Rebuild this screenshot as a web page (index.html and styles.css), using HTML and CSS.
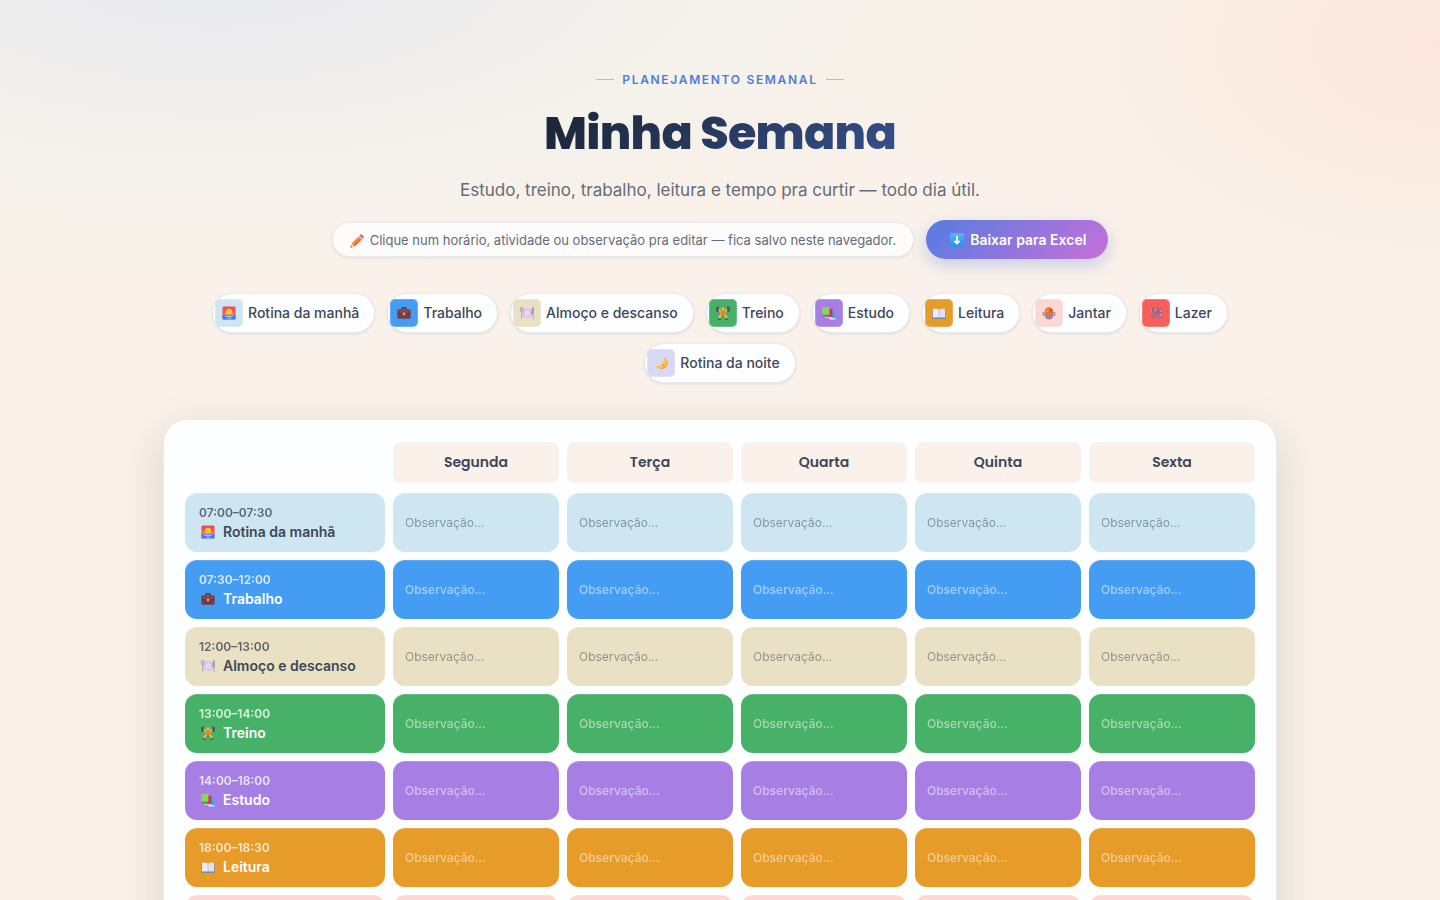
FILE: index.html
```
<!DOCTYPE html>
<html lang="pt-BR">
<head>
    <meta charset="UTF-8">
    <meta name="viewport" content="width=device-width, initial-scale=1.0">
    <title>Minha Semana</title>
    <link rel="stylesheet" href="styles.css">
</head>
<body>
    <svg class="sprite" aria-hidden="true">
        <defs>
            <linearGradient id="sky" x1="0" y1="0" x2="0" y2="1">
                <stop offset="0" stop-color="#f4445b"/>
                <stop offset="1" stop-color="#ff7a4a"/>
            </linearGradient>
            <linearGradient id="blue" x1="0" y1="0" x2="0" y2="1">
                <stop offset="0" stop-color="#55b4ff"/>
                <stop offset="1" stop-color="#2f8fe8"/>
            </linearGradient>
        </defs>
        <symbol id="i-sunrise" viewBox="0 0 32 32">
            <rect x="1" y="1" width="30" height="30" rx="3" fill="url(#sky)"/>
            <path d="M1 20h30v8a3 3 0 0 1-3 3H4a3 3 0 0 1-3-3z" fill="#3e7df0"/>
            <path d="M6 20a10 10 0 1 1 20 0z" fill="#ff9d1c"/>
            <circle cx="16" cy="13" r="7" fill="#ffc928"/>
            <path d="M1 20h30v3H1z" fill="#8a7cf5"/>
            <path d="M8 24h16M12 28h9" stroke="#b9d3ff" stroke-width="2"/>
        </symbol>
        <symbol id="i-work" viewBox="0 0 32 32">
            <path d="M11 9V6q0-2 2-2h6q2 0 2 2v3" fill="none" stroke="#5a3340" stroke-width="3"/>
            <rect x="1" y="8" width="30" height="21" rx="2" fill="#6d3f49"/>
            <path d="M1 10q0-2 2-2h26q2 0 2 2v8H1z" fill="#82474b"/>
            <path d="M1 18h30" stroke="#55313d" stroke-width="2"/>
            <rect x="13" y="15" width="6" height="6" rx="1" fill="#ef8b62"/>
        </symbol>
        <symbol id="i-lunch" viewBox="0 0 32 32">
            <circle cx="17" cy="16" r="11" fill="#d3c2f4"/>
            <circle cx="17" cy="16" r="7" fill="#e4d8fc"/>
            <path d="M1 3v7q0 3 3 3t3-3V3M4 3v26" fill="none" stroke="#a99ab9" stroke-width="2"/>
            <path d="M30 2v28M30 3q-5 6-4 15h4z" fill="#b4a6c5" stroke="#a99ab9" stroke-width="2"/>
        </symbol>
        <symbol id="i-gym" viewBox="0 0 32 32">
            <path d="M5 7h22" stroke="#9897a6" stroke-width="2"/>
            <path d="M2 2v11M5 1v12M27 1v12M30 2v11" stroke="#5a4f63" stroke-width="3"/>
            <path d="M7 8l5 7h8l5-7" fill="none" stroke="#ffb52d" stroke-width="4"/>
            <circle cx="16" cy="7" r="4" fill="#ffb52d"/>
            <path d="M11 12h10l-1 9h-8z" fill="#ff7139"/>
            <path d="M12 20l-4 4 1 5M20 20l4 4-1 5" fill="none" stroke="#ffc13a" stroke-width="4"/>
            <path d="M5 30h6M21 30h6" stroke="#4e4259" stroke-width="3"/>
        </symbol>
        <symbol id="i-books" viewBox="0 0 32 32">
            <path d="M18 9l13 3v17l-13 1z" fill="#32aee9"/>
            <path d="M17 27l14 1v3H17z" fill="#d0e8f5"/>
            <path d="M12 5l12 2v20H12z" fill="#d82e65"/>
            <path d="M8 25h16v2H8z" fill="#eadce9"/>
            <path d="M1 2h16v18H1z" fill="#8ad653"/>
            <path d="M1 20h16v4H4q-3 0-3-4z" fill="#5b8b6b"/>
        </symbol>
        <symbol id="i-book" viewBox="0 0 32 32">
            <path d="M1 8h30v21H1z" fill="#4388cb"/>
            <path d="M2 6q9-1 14 2v18H2z" fill="#eee9fb"/>
            <path d="M30 6q-9-1-14 2v18h14z" fill="#e5dff5"/>
            <path d="M16 8v18" stroke="#c1b6d6" stroke-width="2"/>
        </symbol>
        <symbol id="i-dinner" viewBox="0 0 32 32">
            <path d="M6 15H3v6h4M26 15h3v6h-4" fill="none" stroke="#9a8cae" stroke-width="3"/>
            <path d="M6 18h20q0 13-10 13T6 18z" fill="#9486b3"/>
            <circle cx="16" cy="13" r="10" fill="#ee7137"/>
            <circle cx="12" cy="10" r="3" fill="#ff8c3d"/>
            <circle cx="20" cy="10" r="3" fill="#d0552c"/>
            <path d="M8 16l4 3M21 17l4-3" stroke="#71803b" stroke-width="2"/>
        </symbol>
        <symbol id="i-party" viewBox="0 0 32 32">
            <path d="M3 30l6-17 11 10z" fill="#c9843f"/>
            <path d="M5 24l5 3M8 17l8 8" stroke="#8a5bb8" stroke-width="3"/>
            <path d="M10 14q-4-6 1-11M14 16Q21 12 19 3M18 20q3-7 12-6" fill="none" stroke="#3f7fd0" stroke-width="3"/>
            <path d="M15 18L28 5M20 24l9 1" stroke="#9a5bd0" stroke-width="3"/>
            <path d="M4 8h3v3H4zM25 10h3v3h-3zM25 19h3v3h-3zM14 7h3v3h-3z" fill="#e8b838"/>
        </symbol>
        <symbol id="i-moon" viewBox="0 0 32 32">
            <path d="M23 2q14 12 5 22-11 11-25-1 12 1 17-6 4-7 3-15z" fill="#ffc442"/>
            <path d="M3 23q12 9 22 0 8-8 1-18 10 12 1 21-11 9-24-3z" fill="#f1a449"/>
            <circle cx="21" cy="20" r="2" fill="#e88b3c"/>
        </symbol>
        <symbol id="i-pencil" viewBox="0 0 32 32">
            <path d="M1 31l3-10 7 7z" fill="#ffc18a"/>
            <path d="M4 21L20 5l7 7-16 16z" fill="#ff8743"/>
            <path d="M8 25L24 9l3 3-16 16z" fill="#e96832"/>
            <path d="M19 6l3-3 7 7-3 3z" fill="#d5cbe4"/>
            <path d="M22 3l2-2q2-1 4 1l3 3q1 2-1 4l-2 2z" fill="#f45467"/>
            <path d="M1 31l1-4 3 3z" fill="#694454"/>
        </symbol>
        <symbol id="i-down" viewBox="0 0 32 32">
            <rect x="0" y="0" width="32" height="32" rx="3" fill="url(#blue)"/>
            <path d="M16 6v18M10 18l6 6 6-6" fill="none" stroke="#fff" stroke-width="4"/>
        </symbol>
    </svg>

    <main class="page">
        <header class="hero">
            <p class="eyebrow">Planejamento semanal</p>
            <h1>Minha Semana</h1>
            <p class="subtitle">Estudo, treino, trabalho, leitura e tempo pra curtir — todo dia útil.</p>
            <div class="actions">
                <p class="hint"><svg class="icon"><use href="#i-pencil"/></svg>Clique num horário, atividade ou observação pra editar — fica salvo neste navegador.</p>
                <button type="button" class="download"><svg class="icon"><use href="#i-down"/></svg>Baixar para Excel</button>
            </div>
        </header>

        <ul class="legend">
            <li><span class="swatch morning"><svg class="icon"><use href="#i-sunrise"/></svg></span>Rotina da manhã</li>
            <li><span class="swatch work"><svg class="icon"><use href="#i-work"/></svg></span>Trabalho</li>
            <li><span class="swatch lunch"><svg class="icon"><use href="#i-lunch"/></svg></span>Almoço e descanso</li>
            <li><span class="swatch gym"><svg class="icon"><use href="#i-gym"/></svg></span>Treino</li>
            <li><span class="swatch study"><svg class="icon"><use href="#i-books"/></svg></span>Estudo</li>
            <li><span class="swatch reading"><svg class="icon"><use href="#i-book"/></svg></span>Leitura</li>
            <li><span class="swatch dinner"><svg class="icon"><use href="#i-dinner"/></svg></span>Jantar</li>
            <li><span class="swatch leisure"><svg class="icon"><use href="#i-party"/></svg></span>Lazer</li>
            <li><span class="swatch night"><svg class="icon"><use href="#i-moon"/></svg></span>Rotina da noite</li>
        </ul>

        <div class="card">
            <table>
                <thead>
                    <tr>
                        <td class="corner"></td>
                        <th scope="col">Segunda</th>
                        <th scope="col">Terça</th>
                        <th scope="col">Quarta</th>
                        <th scope="col">Quinta</th>
                        <th scope="col">Sexta</th>
                    </tr>
                </thead>
                <tbody id="schedule"></tbody>
            </table>
        </div>
    </main>

    <script src="script.js"></script>
</body>
</html>
```
FILE: styles.css
```
* {
    box-sizing: border-box;
}
body {
    margin: 0;
    min-height: 100vh;
    font-family: Inter, "Liberation Sans", sans-serif;
    color: #3d4759;
    background:
        radial-gradient(800px 320px at 15% -40px, #e6e8ef, rgba(243, 241, 236, 0.8) 60%, transparent),
        radial-gradient(480px 300px at 100% 45px, #fbe6dd, rgba(249, 238, 228, 0.6) 65%, transparent),
        #f9f1ea;
}
p, ul {
    margin: 0;
    padding: 0;
}
.sprite {
    position: absolute;
    width: 0;
    height: 0;
}
.icon {
    width: 14px;
    height: 14px;
    flex: none;
}
.page {
    max-width: 1162px;
    margin: 0 auto;
    padding: 72px 24px 64px;
}
.hero {
    text-align: center;
}
.eyebrow {
    display: flex;
    align-items: center;
    justify-content: center;
    gap: 8px;
    font-size: 12px;
    line-height: 15px;
    font-weight: 600;
    letter-spacing: 0.14em;
    text-transform: uppercase;
    color: #4f7be0;
}
.eyebrow::before,
.eyebrow::after {
    content: "";
    width: 18px;
    height: 1px;
    background: #a9bbe6;
}
h1 {
    width: fit-content;
    margin: 19px auto;
    font-family: Poppins, Inter, sans-serif;
    font-size: 46px;
    line-height: 54px;
    font-weight: 800;
    letter-spacing: -0.015em;
    color: transparent;
    background: linear-gradient(135deg, #1a2433, #34508c);
    background-clip: text;
    -webkit-background-clip: text;
}
.subtitle {
    font-size: 17px;
    line-height: 22px;
    color: #646c79;
}
.actions {
    display: flex;
    flex-wrap: wrap;
    align-items: center;
    justify-content: center;
    gap: 12px;
    margin-top: 19px;
}
.hint {
    display: flex;
    align-items: center;
    gap: 6px;
    padding: 9px 17px 7px;
    border: 1px solid #e6eaf1;
    border-radius: 999px;
    background: #fefcfb;
    box-shadow: 0 1px 3px rgba(30, 40, 60, 0.1);
    font-size: 13px;
    line-height: 17px;
    color: #646c79;
}
.download {
    display: flex;
    align-items: center;
    gap: 6px;
    padding: 10px 22px 10px 24px;
    border: none;
    border-radius: 999px;
    background: linear-gradient(135deg, #537de2, #c86fd9);
    box-shadow: 0 6px 16px rgba(79, 123, 224, 0.3);
    font: 600 14px/19px Inter, sans-serif;
    color: #fff;
    cursor: pointer;
}
.legend {
    display: flex;
    flex-wrap: wrap;
    justify-content: center;
    gap: 10px 12px;
    max-width: 1040px;
    margin: 34px auto 0;
    list-style: none;
}
.legend li {
    display: flex;
    align-items: center;
    gap: 5px;
    padding: 5px 15px 5px 2px;
    border: 1px solid #e6eaf1;
    border-radius: 999px;
    background: #fdfeff;
    box-shadow: 0 1px 3px rgba(30, 40, 60, 0.1);
    font-size: 14px;
    line-height: 18px;
    font-weight: 500;
}
.swatch {
    display: flex;
    align-items: center;
    justify-content: center;
    width: 28px;
    height: 28px;
    border: 1px solid rgba(255, 255, 255, 0.2);
    border-radius: 5px;
}
.card {
    margin-top: 36px;
    padding: 14px 13px 13px;
    border: 1px solid #e6eaf1;
    border-radius: 24px;
    background: #fdfeff;
    box-shadow: 0 16px 48px rgba(50, 55, 40, 0.16);
}
table {
    width: 100%;
    table-layout: fixed;
    border-collapse: separate;
    border-spacing: 8px;
}
.corner {
    width: 200px;
}
thead th {
    height: 43px;
    padding: 0 0 2px;
    border-bottom: 2px solid transparent;
    border-radius: 8px;
    background: #faf1ea padding-box;
    font: 600 14px/20px Poppins, Inter, sans-serif;
}
tbody th,
tbody td {
    height: 59px;
    border-radius: 12px;
    box-shadow: inset 0 1px 0 rgba(255, 255, 255, 0.15);
}
tbody th {
    padding: 11px 14px;
    text-align: left;
}
tbody td {
    padding: 0 12px;
}
.time,
.activity {
    display: block;
}
.time {
    margin-bottom: 2px;
    font-size: 12px;
    line-height: 17px;
    font-weight: 600;
    opacity: 0.8;
}
.activity {
    display: flex;
    align-items: center;
    gap: 8px;
    padding-left: 2px;
    font-size: 14px;
    line-height: 18px;
    font-weight: 600;
}
.note {
    display: block;
    width: 100%;
    padding: 0;
    border: none;
    outline: none;
    background: none;
    font: 400 12px/18px Inter, sans-serif;
    color: inherit;
}
.note::placeholder {
    color: inherit;
    opacity: 0.5;
}
.strong .note {
    font-weight: 500;
}
.strong {
    color: #fff;
}
.morning {
    background: #cee6f2;
}
.work {
    background: #449df2;
}
.lunch {
    background: #eae0c4;
}
.gym {
    background: #47b267;
}
.study {
    background: #a77fe4;
}
.reading {
    background: #e79b29;
}
.dinner {
    background: #fcd7d3;
}
.leisure {
    background: #f75d5b;
}
.night {
    background: #d7d9f2;
}
```
FILE: script.js
```
const days = ['Segunda', 'Terça', 'Quarta', 'Quinta', 'Sexta'];

// kind, icon, time, activity, white text
const rows = [
    ['morning', 'sunrise', '07:00–07:30', 'Rotina da manhã', false],
    ['work', 'work', '07:30–12:00', 'Trabalho', true],
    ['lunch', 'lunch', '12:00–13:00', 'Almoço e descanso', false],
    ['gym', 'gym', '13:00–14:00', 'Treino', true],
    ['study', 'books', '14:00–18:00', 'Estudo', true],
    ['reading', 'book', '18:00–18:30', 'Leitura', true],
    ['dinner', 'dinner', '18:30–19:30', 'Jantar', false],
    ['leisure', 'party', '19:30–21:30', 'Lazer', true],
    ['night', 'moon', '21:30–22:00', 'Rotina da noite', false]
];

let html = '';
rows.forEach(([kind, icon, time, activity, strong]) => {
    html += '<tr class="' + (strong ? 'strong' : '') + '">';
    html += '<th scope="row" class="' + kind + '">';
    html += '<span class="time" contenteditable="true" spellcheck="false">' + time + '</span>';
    html += '<span class="activity"><svg class="icon"><use href="#i-' + icon + '"/></svg>';
    html += '<span contenteditable="true" spellcheck="false">' + activity + '</span></span></th>';
    days.forEach(day => {
        html += '<td class="' + kind + '"><input class="note" type="text" placeholder="Observação..." aria-label="' + activity + ', ' + day + '"></td>';
    });
    html += '</tr>';
});
document.getElementById('schedule').innerHTML = html;
```
